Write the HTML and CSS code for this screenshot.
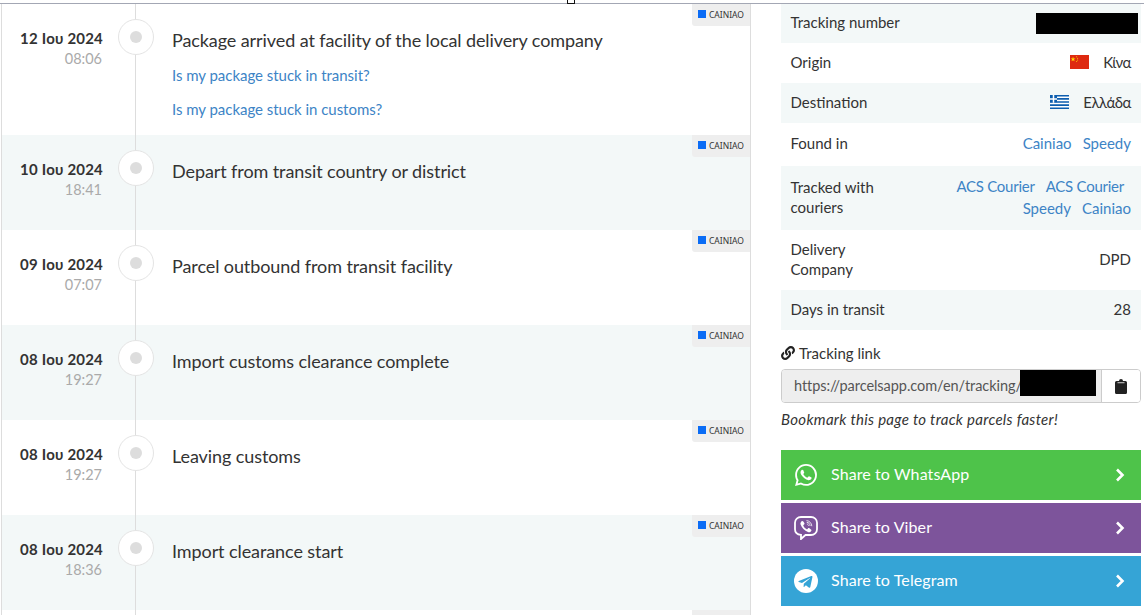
FILE: index.html
```html
<!DOCTYPE html>
<html lang="en">
<head>
<meta charset="utf-8">
<title>Parcel tracking</title>
<link rel="stylesheet" href="styles.css">
</head>
<body>
<div class="topline"><span class="handle"></span></div>
<main class="page">
  <section class="events">
    <article class="event first">
      <div class="when"><b>12 Ιου 2024</b><span>08:06</span></div>
      <div class="node"><i></i></div>
      <div class="what"><p class="title">Package arrived at facility of the local delivery company</p>
        <a class="help" href="#">Is my package stuck in transit?</a>
        <a class="help" href="#">Is my package stuck in customs?</a></div>
      <div class="tag"><em></em>CAINIAO</div>
    </article>
    <article class="event alt">
      <div class="when"><b>10 Ιου 2024</b><span>18:41</span></div>
      <div class="node"><i></i></div>
      <div class="what"><p class="title">Depart from transit country or district</p></div>
      <div class="tag"><em></em>CAINIAO</div>
    </article>
    <article class="event">
      <div class="when"><b>09 Ιου 2024</b><span>07:07</span></div>
      <div class="node"><i></i></div>
      <div class="what"><p class="title">Parcel outbound from transit facility</p></div>
      <div class="tag"><em></em>CAINIAO</div>
    </article>
    <article class="event alt">
      <div class="when"><b>08 Ιου 2024</b><span>19:27</span></div>
      <div class="node"><i></i></div>
      <div class="what"><p class="title">Import customs clearance complete</p></div>
      <div class="tag"><em></em>CAINIAO</div>
    </article>
    <article class="event">
      <div class="when"><b>08 Ιου 2024</b><span>19:27</span></div>
      <div class="node"><i></i></div>
      <div class="what"><p class="title">Leaving customs</p></div>
      <div class="tag"><em></em>CAINIAO</div>
    </article>
    <article class="event alt">
      <div class="when"><b>08 Ιου 2024</b><span>18:36</span></div>
      <div class="node"><i></i></div>
      <div class="what"><p class="title">Import clearance start</p></div>
      <div class="tag"><em></em>CAINIAO</div>
    </article>
    <article class="event">
      <div class="tag"></div>
    </article>
  </section>

  <aside class="side">
    <div class="info h40 alt"><span>Tracking number</span><span class="redact-num"></span></div>
    <div class="info h40"><span>Origin</span>
      <span class="val"><svg class="flag" viewBox="0 0 19 14"><rect width="19" height="14" fill="#de2910"/><path d="M3 1.600l.6 1.800h1.900L4 4.500l.6 1.800L3 5.200 1.500 6.300l.6-1.800L.6 3.400h1.900z" fill="#ffde00"/><circle cx="6.600" cy="1.800" r=".5" fill="#ffde00"/><circle cx="7.600" cy="3.200" r=".5" fill="#ffde00"/><circle cx="7.600" cy="5" r=".5" fill="#ffde00"/><circle cx="6.600" cy="6.400" r=".5" fill="#ffde00"/></svg><span class="greek">Κίνα</span></span></div>
    <div class="info h40 alt"><span>Destination</span>
      <span class="val"><svg class="flag" viewBox="0 0 19 14"><rect width="19" height="14" fill="#fff"/><path d="M0 .8h19M7 3.900h12M7 7h12M0 10.100h19M0 13.200h19" stroke="#0d5eaf" stroke-width="1.560"/><rect width="7" height="7.800" fill="#0d5eaf"/><path d="M3.500 0v7.800M0 3.900h7" stroke="#fff" stroke-width="1.500"/></svg><span class="greek">Ελλάδα</span></span></div>
    <div class="info h43"><span>Found in</span><span class="links"><a href="#">Cainiao</a><a href="#">Speedy</a></span></div>
    <div class="info h64 alt"><span class="label">Tracked with couriers</span>
      <span class="links wrap"><a href="#" class="acs">ACS Courier</a><a href="#" class="acs push">ACS Courier</a><a href="#">Speedy</a><a href="#">Cainiao</a></span></div>
    <div class="info h60"><span class="label">Delivery Company</span><span>DPD</span></div>
    <div class="info h40 alt"><span>Days in transit</span><span>28</span></div>

    <div class="linkhead"><svg class="linkicon" viewBox="0 0 512 512"><path fill="#222" d="M326.600 185.400c59.700 59.800 58.900 155.700.4 214.600l-67.200 67.200c-59.300 59.300-155.700 59.300-215 0s-59.300-155.700 0-215l37.100-37.100c9.800-9.800 26.800-3.300 27.300 10.600.6 17.700 3.800 35.500 9.700 52.700 2 5.800.6 12.300-3.800 16.600l-13.100 13.100c-28 28-28.900 73.700-1.200 102 28 28.500 74 28.700 102.200.5l67.200-67.200c28.200-28.200 28.100-73.800 0-101.800-3.700-3.700-7.400-6.600-10.300-8.600-4.200-2.900-6.700-7.500-6.900-12.600-.4-10.600 3.400-21.500 11.700-29.800l21-21c5.500-5.500 14.200-6.200 20.600-1.700 7.300 5.100 14.200 10.900 20.300 17.400zM467.500 44.400c-59.300-59.300-155.700-59.300-215 0l-67.200 67.200c-.1.100-.3.300-.4.400-58.500 58.900-59.300 154.800.4 214.600 6.100 6.500 13 12.300 20.300 17.400 6.400 4.500 15.100 3.800 20.600-1.700l21-21c8.300-8.300 12.100-19.200 11.700-29.800-.2-5.100-2.700-9.700-6.900-12.600-2.900-2-6.600-4.900-10.300-8.600-28.100-28-28.200-73.600 0-101.800l67.200-67.200c28.200-28.200 74.200-28 102.200.5 27.700 28.300 26.800 74-1.200 102l-13.100 13.100c-4.400 4.300-5.800 10.800-3.800 16.600 5.900 17.200 9.100 35 9.700 52.700.5 13.900 17.500 20.400 27.300 10.600l37.100-37.100c59.300-59.300 59.300-155.700-.1-215.300z"/></svg>Tracking link</div>
    <div class="linkbox">
      <div class="url">https://parcelsapp.com/en/tracking/<span class="redact-url"></span></div>
      <button class="copy" type="button" aria-label="Copy"><svg viewBox="0 0 12 15" class="clip"><path fill="#222" d="M1.500 2H4a2 2 0 0 1 4 0h2.500A1.500 1.500 0 0 1 12 3.500v10a1.500 1.500 0 0 1-1.500 1.500h-9A1.500 1.500 0 0 1 0 13.500v-10A1.500 1.500 0 0 1 1.500 2z"/><rect x="2.500" y="3" width="7" height="1.300" fill="#aaa"/></svg></button>
    </div>
    <p class="hint">Bookmark this page to track parcels faster!</p>

    <div class="shares">
      <a class="share wa" href="#"><svg class="sicon small" viewBox="0 0 24 24"><path fill="#fff" d="M17.472 14.382c-.297-.149-1.758-.867-2.030-.967-.273-.099-.471-.148-.67.150-.197.297-.767.966-.940 1.164-.173.199-.347.223-.644.075-.297-.150-1.255-.463-2.390-1.475-.883-.788-1.480-1.761-1.653-2.059-.173-.297-.018-.458.130-.606.134-.133.298-.347.446-.520.149-.174.198-.298.298-.497.099-.198.050-.371-.025-.520-.075-.149-.669-1.612-.916-2.207-.242-.579-.487-.5-.669-.510-.173-.008-.371-.010-.570-.010-.198 0-.520.074-.792.372-.272.297-1.040 1.016-1.040 2.479 0 1.462 1.065 2.875 1.213 3.074.149.198 2.096 3.200 5.077 4.487.709.306 1.262.489 1.694.625.712.227 1.360.195 1.871.118.571-.085 1.758-.719 2.006-1.413.248-.694.248-1.289.173-1.413-.074-.124-.272-.198-.570-.347m-5.421 7.403h-.004a9.870 9.870 0 01-5.031-1.378l-.361-.214-3.741.982.998-3.648-.235-.374a9.860 9.860 0 01-1.510-5.260c.001-5.450 4.436-9.884 9.888-9.884 2.640 0 5.122 1.030 6.988 2.898a9.825 9.825 0 012.893 6.994c-.003 5.450-4.437 9.884-9.885 9.884m8.413-18.297A11.815 11.815 0 0012.050 0C5.495 0 .160 5.335.157 11.892c0 2.096.547 4.142 1.588 5.945L.057 24l6.305-1.654a11.882 11.882 0 005.683 1.448h.005c6.554 0 11.890-5.335 11.893-11.893a11.821 11.821 0 00-3.480-8.413z"/></svg><span>Share to WhatsApp</span><svg class="chev" viewBox="0 0 10 14"><path d="M2 1.500L7.500 7 2 12.500" fill="none" stroke="#fff" stroke-width="2.600"/></svg></a>
      <a class="share vb" href="#"><svg class="sicon" viewBox="0 0 24 24"><path fill="none" stroke="#fff" stroke-width="1.800" d="M7 1h10c3.300 0 6 2.500 6 5.800v6.500c0 3.300-2.700 5.700-6 5.700h-5.500L7 23v-4.100C3.400 18.600 1 16.600 1 13.300V6.800C1 3.500 3.700 1 7 1z"/><path fill="#fff" d="M7.600 5.200c.7-.4 1.300-.2 1.700.4l1 1.500c.4.600.2 1.100-.3 1.500l-.5.4c-.3.200-.3.600-.1 1 .8 1.500 1.800 2.500 3.200 3.200.4.200.7.100.9-.2l.4-.5c.4-.5 1-.6 1.500-.2l1.500 1.100c.6.400.7 1 .3 1.600-.7 1.100-1.700 1.600-2.800 1.200-4.100-1.600-6.600-4.200-7.900-7.900-.3-1 .2-2.300 1.100-3.100z"/><path fill="none" stroke="#fff" stroke-width=".8" d="M12.500 4.600c2.900.2 5.200 2.500 5.300 5.600M12.700 6.300c2 .1 3.300 1.600 3.400 3.700M12.900 8c1 .1 1.500.8 1.600 1.800"/></svg><span>Share to Viber</span><svg class="chev" viewBox="0 0 10 14"><path d="M2 1.500L7.500 7 2 12.500" fill="none" stroke="#fff" stroke-width="2.600"/></svg></a>
      <a class="share tg" href="#"><svg class="sicon" viewBox="0 0 24 24"><circle cx="12" cy="12" r="12" fill="#fff"/><path fill="#35a4d6" d="M4.800 12.100l12.500-5c.7-.3 1.300.1 1.100 1.100l-2.100 9.900c-.2.700-.6.900-1.200.6l-3.200-2.400-1.600 1.500c-.2.200-.3.300-.7.300l.2-3.300 6-5.400c.3-.2-.1-.4-.4-.2l-7.400 4.700-3.200-1c-.7-.2-.7-.7.100-.8z"/></svg><span>Share to Telegram</span><svg class="chev" viewBox="0 0 10 14"><path d="M2 1.500L7.500 7 2 12.500" fill="none" stroke="#fff" stroke-width="2.600"/></svg></a>
    </div>
  </aside>
</main>
</body>
</html>
```

FILE: styles.css
```css
* { box-sizing: border-box; }
html, body { margin: 0; padding: 0; height: 100%; overflow: hidden; background: #fff; }
body { font-family: Lato, "Noto Sans", sans-serif; color: #333; }

.topline { position: relative; height: 4px; border-bottom: 1px solid #a3a7b4; }
.handle { position: absolute; left: 567px; top: -3px; width: 8px; height: 7px; border: 1px solid #111; background: #fff; }

.page { display: flex; align-items: flex-start; padding-left: 1px; }

.events { width: 750px; height: 611px; flex: none; overflow: hidden; border-left: 1px solid #ddd; border-right: 1px solid #ddd; }
.event { position: relative; display: flex; height: 95px; padding-top: 15px; }
.event.first { height: 131px; }
.event.alt { background: #f3f8f8; }
.event::before { content: ""; position: absolute; left: 133px; top: 0; bottom: 0; width: 1px; background: #ddd; }

.when { width: 101px; flex: none; text-align: right; display: flex; flex-direction: column; padding-top: 9px; line-height: 20px; }
.when b { font-size: 15px; font-weight: 700; color: #333; white-space: nowrap; letter-spacing: .2px; }
.when span { font-size: 14.500px; color: #aaa; padding: 1px 1px 0 0; }

.node { position: relative; flex: none; width: 36px; height: 36px; margin-left: 15px; margin-right: 18px; background: #fff; border: 1px solid #e4e4e4; border-radius: 50%; display: flex; align-items: center; justify-content: center; }
.node i { display: block; width: 12px; height: 12px; background: #ddd; border-radius: 50%; }

.what { min-width: 0; padding-top: 8px; }
.title { margin: 0; font-size: 18px; line-height: 26px; color: #333; letter-spacing: -.09px; }
.help { display: block; margin-top: 12px; font-size: 15px; line-height: 22px; color: #3d84c6; text-decoration: none; letter-spacing: -.03px; }
.title + .help { margin-top: 11px; }

.tag { position: absolute; right: 0; top: 0; width: 58px; height: 22px; background: #eee; border-bottom-left-radius: 3px; display: flex; align-items: flex-start; padding: 6px 0 0 6px; font-size: 8.500px; line-height: 10px; color: #333; font-family: "Noto Sans", sans-serif; }
.tag em { display: block; width: 8px; height: 8px; margin-right: 3px; background: #0b6cf5; }

.side { width: 360px; flex: none; margin-left: 30px; margin-top: -1px; font-size: 15px; }
.info { display: flex; justify-content: space-between; align-items: center; padding: 0 10px 3px 9.500px; line-height: 20px; }
.info.alt { background: #f3f8f8; }
.h40 { height: 40px; } .h43 { height: 43px; } .h60 { height: 60px; } .h64 { height: 64px; }
.label { width: 110px; flex: none; }
.val { display: flex; align-items: center; }
.greek { letter-spacing: -.5px; }
.flag { width: 19px; height: 14px; margin-right: 14px; }
.redact-num { width: 102px; height: 21px; background: #000; margin-right: -7px; margin-top: 3px; }
.links { display: flex; justify-content: flex-end; column-gap: 11px; }
.links.wrap { flex-wrap: wrap; width: 200px; line-height: 22px; }
.links .acs { letter-spacing: -.25px; }
.links.wrap .push { margin-right: 7px; }
.links a { color: #3d84c6; text-decoration: none; }

.linkhead { margin-top: 13px; line-height: 20px; display: flex; align-items: center; gap: 4px; }
.linkicon { width: 14px; height: 14px; }
.linkbox { display: flex; height: 34px; margin-top: 6px; border: 1px solid #ccc; border-radius: 4px; overflow: hidden; }
.url { position: relative; flex: 1; background: #eee; color: #555; padding-left: 12px; line-height: 32px; font-size: 14.500px; letter-spacing: -.05px; white-space: nowrap; border-right: 1px solid #ccc; overflow: hidden; }
.redact-url { position: absolute; left: 238px; top: -1px; width: 76px; height: 27px; background: #000; }
.copy { width: 38px; flex: none; background: #fff; border: 0; padding: 0; display: flex; align-items: center; justify-content: center; }
.clip { width: 12px; height: 15px; }
.hint { margin: 6px 0 0; line-height: 20px; font-style: italic; color: #333; letter-spacing: .3px; }

.shares { display: flex; flex-direction: column; gap: 3px; margin-top: 21px; }
.share { height: 50px; display: flex; align-items: center; padding: 0 16px 0 13px; color: #fff; text-decoration: none; font-size: 16px; letter-spacing: .1px; }
.share span { flex: 1; margin-left: 13px; padding-bottom: 4px; }
.wa { background: #4ec34a; } .vb { background: #7d549b; } .tg { background: #35a4d6; }
.sicon { width: 24px; height: 24px; flex: none; }
.sicon.small { width: 22px; height: 22px; margin: 0 1px; }
.chev { width: 10px; height: 14px; flex: none; }
```
